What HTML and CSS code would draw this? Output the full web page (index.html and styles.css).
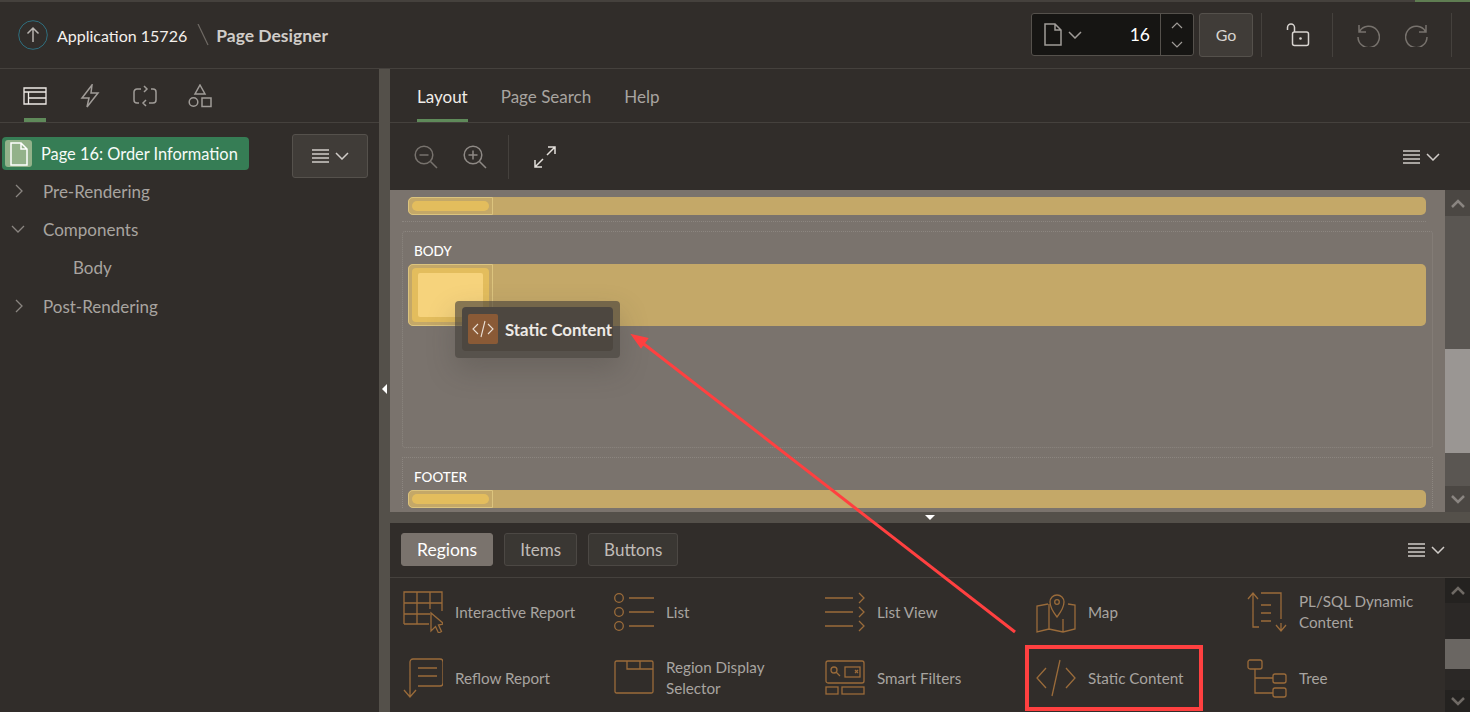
FILE: index.html
```html
<!DOCTYPE html>
<html lang="en">
<head>
<meta charset="utf-8">
<title>Page Designer</title>
<link rel="stylesheet" href="styles.css">
</head>
<body>
<div class="app">
  <div class="topline"><span class="topline-green"></span></div>
  <header class="header">
    <svg class="up-icon" viewBox="0 0 30 30"><circle cx="15" cy="15" r="14.3" fill="none" stroke="#2f6f7f" stroke-width="1"/><path d="M15 22V8M9.5 13.5L15 8l5.500 5.500" fill="none" stroke="#b8b4b0" stroke-width="1.500"/></svg>
    <span class="app-name">Application 15726</span>
    <svg class="slash" viewBox="0 0 12 22"><path d="M1 0l10 21" stroke="#6f6a65" stroke-width="1.200"/></svg>
    <span class="page-title">Page Designer</span>
    <div class="header-tools">
      <div class="page-picker">
        <div class="picker-main">
          <svg class="i-doc" viewBox="0 0 18 23"><path d="M1 1h10l6 6v15H1zM11 1v6h6" fill="none" stroke="#a09c98" stroke-width="1.500"/></svg>
          <svg class="i-chev" viewBox="0 0 14 8"><path d="M1 1l6 6 6-6" fill="none" stroke="#a09c98" stroke-width="1.500"/></svg>
          <span class="picker-num">16</span>
        </div>
        <div class="picker-spin">
          <svg class="i-spin" viewBox="0 0 12 7"><path d="M1 6l5-5 5 5" fill="none" stroke="#a09c98" stroke-width="1.200"/></svg>
          <svg class="i-spin" viewBox="0 0 12 7"><path d="M1 1l5 5 5-5" fill="none" stroke="#a09c98" stroke-width="1.200"/></svg>
        </div>
      </div>
      <div class="go-btn">Go</div>
      <span class="vsep vsep-a"></span>
      <svg class="i-lock" viewBox="0 0 24 24"><path d="M1.500 7V4.500a3.500 3.500 0 0 1 7 0V9" fill="none" stroke="#d8d4d0" stroke-width="1.500"/><rect x="6.500" y="9" width="16" height="13.500" rx="2" fill="none" stroke="#d8d4d0" stroke-width="1.500"/><circle cx="14.500" cy="15.500" r="1.300" fill="#d8d4d0"/></svg>
      <span class="vsep vsep-b"></span>
      <svg class="i-undo" viewBox="0 0 24 24"><path d="M3 2v7h7M3.500 8.500A10.700 10.700 0 1 1 2 14" fill="none" stroke="#77726d" stroke-width="1.500"/></svg>
      <svg class="i-redo" viewBox="0 0 24 24"><path d="M21 2v7h-7M20.500 8.500A10.700 10.700 0 1 0 22 14" fill="none" stroke="#77726d" stroke-width="1.500"/></svg>
      <span class="vsep vsep-c"></span>
    </div>
  </header>
  <main class="main">
    <aside class="left">
      <nav class="left-tabs">
        <div class="ltab ltab-on"><svg viewBox="0 0 24 18"><path d="M1 1h22v16H1zM1 5h22M5.500 5v12M5.500 11H23" fill="none" stroke="#eeeae6" stroke-width="1.300"/></svg></div>
        <div class="ltab"><svg viewBox="0 0 20 24"><path d="M12 1L2 14h7l-2 9 11-14h-7z" fill="none" stroke="#a09c98" stroke-width="1.500"/></svg></div>
        <div class="ltab"><svg viewBox="0 0 24 22"><path d="M8 4H4a3 3 0 0 0-3 3v8a3 3 0 0 0 3 3h2M16 18h4a3 3 0 0 0 3-3V7a3 3 0 0 0-3-3h-2M11 1l3 3-3 3M13 15l-3 3 3 3" fill="none" stroke="#a09c98" stroke-width="1.500"/></svg></div>
        <div class="ltab"><svg viewBox="0 0 24 24"><path d="M12 1l5 9H7z" fill="none" stroke="#a09c98" stroke-width="1.500"/><circle cx="5.500" cy="18" r="4.300" fill="none" stroke="#a09c98" stroke-width="1.500"/><rect x="14" y="14" width="9" height="8.500" fill="none" stroke="#a09c98" stroke-width="1.500"/></svg></div>
      </nav>
      <div class="tree-area">
        <div class="tree-head">
          <div class="page-node">
            <span class="page-node-icon"><svg viewBox="0 0 18 24"><path d="M1 1h10l6 6v16H1zM11 1v6h6" fill="none" stroke="#fff" stroke-width="1.500"/></svg></span>
            <span>Page 16: Order Information</span>
          </div>
          <div class="menu-btn">
            <svg class="i-menu" viewBox="0 0 17 14"><path d="M0 1h17M0 5h17M0 9h17M0 13h17" stroke="#d0ccc8" stroke-width="1.400"/></svg>
            <svg class="i-chev" viewBox="0 0 14 8"><path d="M1 1l6 6 6-6" fill="none" stroke="#d0ccc8" stroke-width="1.500"/></svg>
          </div>
        </div>
        <div class="tree-row"><svg class="tw" viewBox="0 0 8 14"><path d="M1 1l6 6-6 6" fill="none" stroke="#8a8581" stroke-width="1.300"/></svg><span>Pre-Rendering</span></div>
        <div class="tree-row"><svg class="tw tw-down" viewBox="0 0 14 8"><path d="M1 1l6 6 6-6" fill="none" stroke="#8a8581" stroke-width="1.300"/></svg><span>Components</span></div>
        <div class="tree-row tree-child"><span>Body</span></div>
        <div class="tree-row"><svg class="tw" viewBox="0 0 8 14"><path d="M1 1l6 6-6 6" fill="none" stroke="#8a8581" stroke-width="1.300"/></svg><span>Post-Rendering</span></div>
      </div>
    </aside>
    <div class="v-split"><span class="v-split-arrow"></span></div>
    <section class="right">
      <nav class="right-tabs">
        <span class="rtab rtab-on">Layout</span>
        <span class="rtab">Page Search</span>
        <span class="rtab">Help</span>
      </nav>
      <div class="toolbar">
        <svg class="i-zoom" viewBox="0 0 24 24"><circle cx="10" cy="10" r="8.800" fill="none" stroke="#77726d" stroke-width="1.500"/><path d="M16.500 16.500L23 23M5.500 10h9" fill="none" stroke="#77726d" stroke-width="1.500"/></svg>
        <svg class="i-zoom" viewBox="0 0 24 24"><circle cx="10" cy="10" r="8.800" fill="none" stroke="#8e8985" stroke-width="1.500"/><path d="M16.500 16.500L23 23M5.500 10h9M10 5.500v9" fill="none" stroke="#8e8985" stroke-width="1.500"/></svg>
        <span class="tool-sep"></span>
        <svg class="i-expand" viewBox="0 0 22 22"><path d="M13 9l8-8M14 1h7v7M9 13l-8 8M8 21H1v-7" fill="none" stroke="#e4e0dc" stroke-width="1.500"/></svg>
        <span class="tool-end">
          <svg class="i-menu" viewBox="0 0 17 14"><path d="M0 1h17M0 5h17M0 9h17M0 13h17" stroke="#d0ccc8" stroke-width="1.400"/></svg>
          <svg class="i-chev" viewBox="0 0 14 8"><path d="M1 1l6 6 6-6" fill="none" stroke="#d0ccc8" stroke-width="1.500"/></svg>
        </span>
      </div>
      <div class="canvas-wrap">
        <div class="canvas">
          <div class="slot slot-thin"><span class="slot-key"><span class="pill"></span></span></div>
          <div class="zone-end"></div>
          <div class="zone zone-body">
            <div class="zone-label">BODY</div>
            <div class="slot slot-body"><span class="slot-key"><span class="key-inner"><span class="key-core"></span></span></span></div>
          </div>
          <div class="zone zone-footer">
            <div class="zone-label">FOOTER</div>
            <div class="slot slot-thin"><span class="slot-key"><span class="pill"></span></span></div>
          </div>
        </div>
        <div class="scrollbar sb-canvas">
          <span class="sb-btn"><svg viewBox="0 0 14 9"><path d="M1 8l6-6 6 6" fill="none" stroke="#8a8581" stroke-width="2.500"/></svg></span>
          <span class="sb-track sb-t1"></span><span class="sb-thumb"></span><span class="sb-track sb-t2"></span>
          <span class="sb-btn"><svg viewBox="0 0 14 9"><path d="M1 1l6 6 6-6" fill="none" stroke="#8a8581" stroke-width="2.500"/></svg></span>
        </div>
      </div>
      <div class="h-split"><span class="h-split-arrow"></span></div>
      <div class="gallery-tabs">
        <span class="gtab gtab-on">Regions</span>
        <span class="gtab">Items</span>
        <span class="gtab">Buttons</span>
        <span class="tool-end">
          <svg class="i-menu" viewBox="0 0 17 14"><path d="M0 1h17M0 5h17M0 9h17M0 13h17" stroke="#d0ccc8" stroke-width="1.400"/></svg>
          <svg class="i-chev" viewBox="0 0 14 8"><path d="M1 1l6 6 6-6" fill="none" stroke="#d0ccc8" stroke-width="1.500"/></svg>
        </span>
      </div>
      <div class="gallery-wrap">
        <div class="gallery">
          <div class="gitem"><svg viewBox="0 0 40 42"><path d="M1 33V1h38v19M1 12h38M1 23h26M14 1v32M27 1v17M1 33h25" fill="none" stroke="#9a6b3a" stroke-width="1.300"/><path d="M28 22v18l4.500-4.500 3 6.500 3-1.500-3-6.500 5.500-1z" fill="none" stroke="#9a6b3a" stroke-width="1.300"/></svg><span>Interactive Report</span></div>
          <div class="gitem"><svg viewBox="0 0 40 40"><g fill="none" stroke="#9a6b3a" stroke-width="1.300"><circle cx="5" cy="6" r="4.300"/><circle cx="5" cy="20" r="4.300"/><circle cx="5" cy="34" r="4.300"/><path d="M15 6h25M15 20h25M15 34h25"/></g></svg><span>List</span></div>
          <div class="gitem"><svg viewBox="0 0 40 40"><g fill="none" stroke="#9a6b3a" stroke-width="1.300"><path d="M0 6h28M0 20h28M0 34h28M34 1l5 5-5 5M34 15l5 5-5 5M34 29l5 5-5 5"/></g></svg><span>List View</span></div>
          <div class="gitem"><svg viewBox="0 0 40 42"><g fill="none" stroke="#9a6b3a" stroke-width="1.300"><path d="M21 26s-7-9-7-15a7 7 0 0 1 14 0c0 6-7 15-7 15z"/><circle cx="21" cy="11" r="2.300"/><path d="M12 13L1 15v26l12-3 14 3 12-3V14l-7-1M13 13v25M27 28v13"/></g></svg><span>Map</span></div>
          <div class="gitem"><svg viewBox="0 0 40 42"><g fill="none" stroke="#9a6b3a" stroke-width="1.300"><path d="M1 8l5-6 5 6M6 2v34h6M14 2h20v26M39 34l-5 6-5-6M34 40v-8M14 14h10M14 22h10M14 30h10M14 2h8"/></g></svg><span>PL/SQL Dynamic Content</span></div>
          <div class="gitem"><svg viewBox="0 0 40 42"><g fill="none" stroke="#9a6b3a" stroke-width="1.300"><path d="M7 34V5a3 3 0 0 1 3-3h27a3 3 0 0 1 3 3v21a3 3 0 0 1-3 3H15M15 11h19M15 19h19M1 33l6 7 6-7M7 40v-8"/></g></svg><span>Reflow Report</span></div>
          <div class="gitem"><svg viewBox="0 0 40 40"><g fill="none" stroke="#9a6b3a" stroke-width="1.300"><rect x="1" y="3" width="38" height="32" rx="1.500"/><path d="M13 3v8h26M26 3v8"/></g></svg><span>Region Display Selector</span></div>
          <div class="gitem"><svg viewBox="0 0 40 40"><g fill="none" stroke="#9a6b3a" stroke-width="1.300"><rect x="1" y="3" width="38" height="22" rx="2"/><circle cx="9" cy="12" r="3"/><path d="M11 14l4 4"/><rect x="20" y="9" width="15" height="10"/><path d="M30 12l3 3M33 12l-3 3"/><rect x="1" y="29" width="12" height="7"/><rect x="17" y="29" width="22" height="7"/></g></svg><span>Smart Filters</span></div>
          <div class="gitem"><svg viewBox="0 0 40 40"><g fill="none" stroke="#9a6b3a" stroke-width="1.300"><path d="M10 10L1 20l9 10M30 10l9 10-9 10M24 2L16 38"/></g></svg><span>Static Content</span></div>
          <div class="gitem"><svg viewBox="0 0 40 40"><g fill="none" stroke="#9a6b3a" stroke-width="1.300"><rect x="1" y="2" width="14" height="9" rx="2"/><rect x="26" y="16" width="13" height="9" rx="2"/><rect x="26" y="30" width="13" height="9" rx="2"/><path d="M8 11v24h18M8 20h18"/></g></svg><span>Tree</span></div>
        </div>
        <div class="scrollbar sb-gallery">
          <span class="sb-btn"><svg viewBox="0 0 14 9"><path d="M1 8l6-6 6 6" fill="none" stroke="#6f6a65" stroke-width="2.500"/></svg></span>
          <span class="sb-track sb-t3"></span><span class="sb-thumb sb-thumb-g"></span><span class="sb-track sb-t4"></span>
          <span class="sb-btn sb-btn-g"><svg viewBox="0 0 14 9"><path d="M1 1l6 6 6-6" fill="none" stroke="#6f6a65" stroke-width="2.500"/></svg></span>
        </div>
      </div>
    </section>
  </main>
</div>
<div class="drag-helper">
  <div class="drag-inner">
    <span class="drag-icon"><svg viewBox="0 0 22 18"><path d="M6 4L1 9l5 5M16 4l5 5-5 5M13 1L9 17" fill="none" stroke="#eadfd4" stroke-width="1.100"/></svg></span>
    <span class="drag-text">Static Content</span>
  </div>
</div>
<svg class="arrow" viewBox="0 0 1470 712"><path d="M1015 632L640 341" stroke="#ff4040" stroke-width="3" fill="none"/><path d="M632 335l15.500 3.500-6.500 9z" fill="#ff4040" stroke="#ff4040" stroke-width="1.500"/></svg>
<div class="callout"></div>
</body>
</html>
```
FILE: styles.css
```css
* { box-sizing: border-box; }
html, body { margin: 0; height: 100%; overflow: hidden; }
body { background: #312d2a; font-family: "Lato", "Noto Sans", sans-serif; color: #d8d4d0; font-size: 17px; }
svg { display: block; flex: none; }
.app { height: 712px; display: flex; flex-direction: column; }

.topline { height: 2px; background: #45413d; display: flex; justify-content: flex-end; flex: none; }
.topline-green { width: 55px; background: #5f7d52; }
.header { height: 67px; flex: none; display: flex; align-items: center; padding: 0 0 1px 18px; border-bottom: 1px solid #45413d; }
.up-icon { width: 30px; height: 30px; }
.app-name { margin: 2px 0 0 9px; color: #f4f0ec; font-size: 16px; }
.slash { width: 12px; height: 22px; margin: 0 7px 0 10px; }
.page-title { margin-top: 2px; font-weight: 700; color: #d0ccc8; font-size: 17.500px; }
.header-tools { margin-left: auto; display: flex; align-items: center; height: 44px; }
.page-picker { width: 163px; height: 43px; display: flex; background: #161513; border: 1px solid #55514c; border-radius: 3px; }
.picker-main { flex: 1; display: flex; align-items: center; padding: 0 10px 0 12px; border-right: 1px solid #55514c; }
.i-doc { width: 18px; height: 23px; }
.i-chev { width: 14px; height: 8px; }
.picker-main .i-chev { margin-left: 6px; }
.picker-num { margin-left: auto; color: #fff; font-size: 17.500px; }
.picker-spin { width: 32px; display: flex; flex-direction: column; align-items: center; justify-content: center; gap: 12px; }
.i-spin { width: 12px; height: 7px; }
.go-btn { width: 54px; height: 44px; margin-left: 5px; background: #403c38; border: 1px solid #55514c; border-radius: 3px; display: flex; align-items: center; justify-content: center; color: #d8d4d0; font-size: 16px; }
.vsep { width: 1px; height: 44px; background: #45413d; }
.vsep-a { margin: 0 24px 0 8px; }
.vsep-b { margin: 0 23px 0 22px; }
.vsep-c { margin: 0 18px 0 22px; }
.i-lock { width: 24px; height: 24px; }
.i-undo, .i-redo { width: 24px; height: 24px; }
.i-redo { margin-left: 25px; }

.main { flex: 1; min-height: 0; display: flex; }
.left { width: 379px; flex: none; display: flex; flex-direction: column; }
.left-tabs { height: 54px; flex: none; display: flex; padding-left: 24px; border-bottom: 1px solid #45413d; gap: 33px; }
.ltab { width: 22px; height: 53px; padding-top: 5px; display: flex; align-items: center; justify-content: center; border-bottom: 4px solid transparent; }
.ltab svg { width: 24px; height: 24px; }
.ltab-on { border-bottom-color: #5f8a5a; }
.tree-area { flex: 1; position: relative; }
.tree-head { display: flex; align-items: flex-start; padding: 11px 0 0 2px; height: 49px; }
.page-node { width: 247px; height: 33px; margin-top: 3px; background: #367d55; border-radius: 4px; display: flex; align-items: center; padding-left: 3px; gap: 9px; color: #f6fbf8; font-size: 16.400px; }
.page-node-icon { width: 27px; height: 27px; background: #93b28a; border-radius: 3px; display: flex; align-items: center; justify-content: center; }
.page-node-icon svg { width: 18px; height: 24px; }
.menu-btn { width: 76px; height: 44px; margin-left: 43px; background: #403c38; border: 1px solid #55514c; border-radius: 3px; display: flex; align-items: center; justify-content: center; gap: 6px; }
.i-menu { width: 17px; height: 14px; }
.tree-row { height: 38.330px; display: flex; align-items: center; padding-left: 43px; color: #a8a4a0; position: relative; }
.tree-child { padding-left: 73px; }
.tw { position: absolute; left: 15px; top: 12px; width: 8px; height: 14px; }
.tw-down { left: 11px; top: 15px; width: 14px; height: 8px; }

.v-split { width: 11px; flex: none; background: #54504a; display: flex; align-items: center; }
.v-split-arrow { margin: -3px 0 0 3px; border: 5px solid transparent; border-left-width: 0; border-right: 5px solid #fff; }
.right { flex: 1; min-width: 0; display: flex; flex-direction: column; }
.right-tabs { height: 54px; flex: none; display: flex; padding-left: 27px; gap: 33px; border-bottom: 1px solid #45413d; }
.rtab { height: 53px; padding-top: 5px; display: flex; align-items: center; color: #a8a4a0; border-bottom: 3px solid transparent; }
.rtab-on { color: #f0ece8; border-bottom-color: #5f8a5a; }
.toolbar { height: 67px; flex: none; display: flex; align-items: center; padding: 0 30px 0 24px; gap: 25px; }
.i-zoom { width: 24px; height: 24px; }
.tool-sep { width: 1px; height: 44px; background: #45413d; margin-left: -4px; }
.i-expand { width: 22px; height: 22px; }
.tool-end { margin-left: auto; display: flex; align-items: center; gap: 6px; }

.canvas-wrap { height: 322px; flex: none; display: flex; }
.canvas { flex: 1; min-width: 0; background: #7a736d; overflow: hidden; padding: 7px 19px 0 18px; }
.slot { display: flex; background: #c4a868; border-radius: 5px; }
.slot-thin { height: 18px; }
.zone-end { height: 1px; margin: 6px 0 9px -6px; border-top: 1px dotted #8c8680; }
.slot-key { width: 85px; border: 1px solid #dcc47e; border-radius: 5px 0 0 5px; padding: 3px; display: flex; }
.pill { flex: 1; background: #e3bd5d; border-radius: 6px; }
.slot-body { height: 62px; }
.key-inner { flex: 1; background: #e3bd5d; border-radius: 4px; padding: 5px 6px; display: flex; }
.key-core { flex: 1; background: #f6d37c; border-radius: 2px; }
.zone { margin: 0 -7px 0 -6px; padding: 0 6px 0 5px; border-left: 1px dotted #8c8680; border-right: 1px dotted #8c8680; border-top: 1px dotted #8c8680; }
.zone-body { height: 217px; border-bottom: 1px dotted #8c8680; margin-bottom: 9px; border-radius: 3px; }
.zone-label { height: 32px; padding: 10px 0 0 6px; font-size: 13.500px; font-weight: 500; color: #fff; line-height: 18px; }

.scrollbar { width: 25px; flex: none; display: flex; flex-direction: column; }
.sb-btn { height: 26px; background: #4b4743; display: flex; align-items: center; justify-content: center; }
.sb-btn svg { width: 14px; height: 9px; }
.sb-track { background: #5a5652; }
.sb-t1 { height: 133px; }
.sb-thumb { height: 104px; background: #9a9693; }
.sb-t2 { height: 33px; }
.sb-gallery .sb-btn { background: #242220; height: 25px; }
.sb-gallery .sb-btn-g { height: 22px; }
.sb-gallery .sb-track { background: #2b2826; }
.sb-t3 { height: 36px; }
.sb-thumb-g { height: 30px; background: #6a6662; }
.sb-t4 { height: 21px; }

.h-split { height: 11px; flex: none; background: #54504a; display: flex; justify-content: center; align-items: center; }
.h-split-arrow { border-left: 5px solid transparent; border-right: 5px solid transparent; border-top: 5px solid #fff; }
.gallery-tabs { height: 55px; flex: none; display: flex; align-items: center; padding: 0 25px 1px 11px; gap: 11px; border-bottom: 1px solid #45413d; }
.gtab { height: 33px; padding: 0 15px; display: flex; align-items: center; background: #3a3733; border: 1px solid #4c4844; border-radius: 3px; color: #c0bcb8; }
.gtab-on { background: #7a736d; border-color: #7a736d; color: #fff; font-size: 17.500px; }
.gallery-wrap { flex: 1; min-height: 0; display: flex; overflow: hidden; }
.gallery { flex: 1; display: grid; grid-template-columns: repeat(5, 211px); grid-auto-rows: 66px; padding: 1px 0 0 13px; overflow: hidden; }
.gitem { display: flex; align-items: center; gap: 12px; font-size: 15.200px; line-height: 21px; color: #a8a4a0; padding-right: 16px; }
.gitem svg { width: 40px; height: 42px; }

.drag-helper { position: absolute; left: 455px; top: 301px; width: 165px; height: 57px; padding: 6px 7px; background: rgba(66, 62, 56, .62); border-radius: 4px; box-shadow: 0 12px 28px rgba(60, 55, 50, .25); }
.drag-inner { height: 44px; background: #4d4740; border-radius: 4px; display: flex; align-items: center; padding-left: 6px; gap: 7px; font-weight: 700; color: #eeeae6; font-size: 16.800px; }
.drag-text { white-space: nowrap; }
.drag-icon { width: 30px; height: 30px; flex: none; background: #8a5a36; border-radius: 2px; display: flex; align-items: center; justify-content: center; }
.drag-icon svg { width: 22px; height: 18px; }
.arrow { position: absolute; left: 0; top: 0; width: 1470px; height: 712px; pointer-events: none; }
.callout { position: absolute; left: 1025px; top: 645px; width: 178px; height: 66px; border: 4px solid #ff4040; }
```
